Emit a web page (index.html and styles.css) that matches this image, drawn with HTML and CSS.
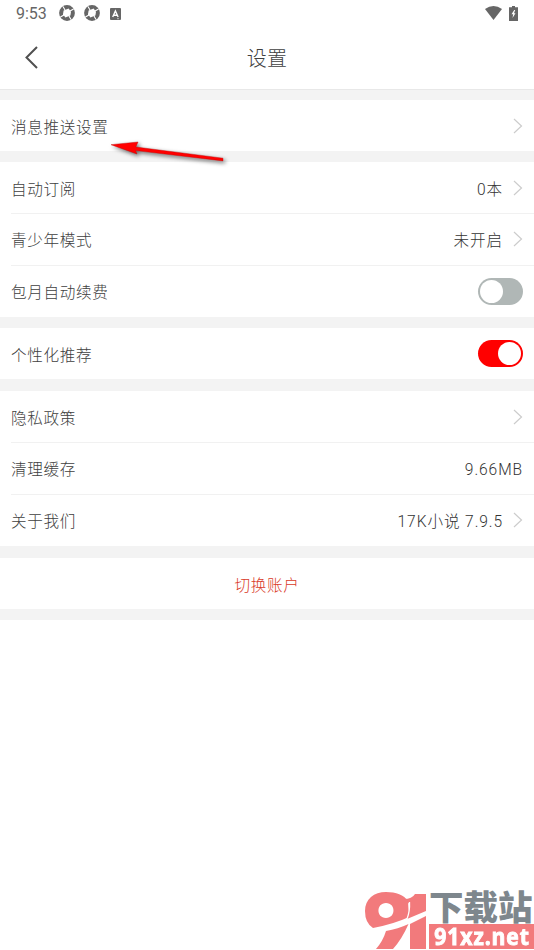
FILE: index.html
```html
<!DOCTYPE html>
<html lang="zh-CN">
<head>
<meta charset="utf-8">
<title>设置</title>
<link rel="stylesheet" href="styles.css">
</head>
<body>
<svg class="defs" aria-hidden="true">
  <symbol id="chevron" viewBox="0 0 10 16"><path d="M1 1l7.5 7L1 15"/></symbol>
  <symbol id="aperture" viewBox="0 0 16 16">
    <circle cx="8" cy="8" r="7.9" fill="#666"/>
    <path d="M4.6 5.6L9.6 3.6 12 6.8 11.4 10.4 6.4 12.4 4 9.2z" fill="#fff"/>
    <path d="M6 5L4 1.4M11 6L14.6 4M10 11L12 14.6M5 10L1.4 12" stroke="#fff" stroke-width="1.1"/>
  </symbol>
</svg>
<div class="status">
  <span class="time">9:53</span>
  <svg class="app"><use href="#aperture"/></svg>
  <svg class="app"><use href="#aperture"/></svg>
  <svg class="badge" viewBox="0 0 11 12"><rect width="11" height="12" rx="1" fill="#666"/><path d="M2.7 9L5.4 3 8.1 9M3.7 7.2h3.5" fill="none" stroke="#fff" stroke-width="1.4"/><path d="M7 10.7h2" stroke="#ddd" stroke-width=".7"/></svg>
  <svg class="wifi" viewBox="0 0 17 14"><path d="M0 3.1Q8.5-3 17 3.1L8.5 14z" fill="#666"/></svg>
  <svg class="battery" viewBox="0 0 9 15"><path d="M3 0h3v1.2h3V15H0V1.2h3z" fill="#666"/><path d="M5.2 4L2.5 8.2h1.7L3.5 12l3-4.7H5L6.2 4z" fill="#fff"/></svg>
</div>
<header class="header">
  <svg class="back" viewBox="0 0 13 23"><path d="M12 1L1.5 11.5 12 22"/></svg>
  <h1>设置</h1>
</header>
<main>
  <section class="group first">
    <div class="row"><span>消息推送设置</span><svg class="chevron"><use href="#chevron"/></svg></div>
  </section>
  <section class="group subscriptions">
    <div class="row"><span>自动订阅</span><span class="value">0本</span><svg class="chevron"><use href="#chevron"/></svg></div>
    <div class="row"><span>青少年模式</span><span class="value">未开启</span><svg class="chevron"><use href="#chevron"/></svg></div>
    <div class="row"><span>包月自动续费</span><i class="switch"></i></div>
  </section>
  <section class="group personal">
    <div class="row"><span>个性化推荐</span><i class="switch on"></i></div>
  </section>
  <section class="group about">
    <div class="row"><span>隐私政策</span><svg class="chevron"><use href="#chevron"/></svg></div>
    <div class="row"><span>清理缓存</span><span class="value end">9.66MB</span></div>
    <div class="row"><span>关于我们</span><span class="value">17K小说 7.9.5</span><svg class="chevron"><use href="#chevron"/></svg></div>
  </section>
  <section class="group account"><div class="row"><span>切换账户</span></div></section>
</main>
<svg class="pointer" viewBox="0 0 130 34">
  <path d="M5 8.7L32 6 29.8 11 117 22.2V24.9L29.6 14.6 31 18z" fill="#f00" stroke="#c00000" stroke-width=".4"/>
</svg>
<div class="watermark">
  <svg class="mark" viewBox="0 0 62 58">
    <path fill="#f27a7c" fill-rule="evenodd" d="M22 1C32 1 40 4 44 10L45 26Q30 33 9 37Q1 32 1 20C1 8 10 1 22 1zM22 12C12 12 12 27 22 27C32 27 32 12 22 12z"/>
    <path d="M40 8Q48 8 51 3H62V20L43 28L45.5 13z" fill="#f27a7c"/>
    <path d="M22 40Q34 38 44.5 33Q38 48 29 58H12Q19 50 22 40zM46 33L62 25V58H46z" fill="#f27a7c"/>
    <path d="M45.5 11Q46 20 43 28" fill="none" stroke="#fff" stroke-width="1.3"/>
  </svg>
  <div class="brand"><div class="brand-name">下载站</div><div class="brand-url"><span>91xz.net</span></div></div>
</div>
</body>
</html>
```
FILE: styles.css
```css
* { box-sizing: border-box; }
body {
  margin: 0;
  height: 950px;
  position: relative;
  overflow: hidden;
  background: #fff;
  color: #404040;
  font: 15.6px/20px Roboto, "Noto Sans CJK SC Light", "Noto Sans CJK SC DemiLight", "Noto Sans CJK SC", sans-serif;
  letter-spacing: .65px;
}
.defs { position: absolute; width: 0; height: 0; }
.status { height: 28px; display: flex; align-items: center; padding: 0 16px 2px; color: #666; }
.time { width: 43px; font-size: 16px; letter-spacing: 0; padding-top: 2px; }
.app { width: 16px; height: 16px; margin-right: 9px; flex: none; }
.badge { width: 11px; height: 12px; margin-left: 1px; margin-top: 1px; }
.wifi { width: 17px; height: 14px; margin-left: auto; margin-right: 7px; }
.battery { width: 9px; height: 15px; }
.header { height: 62px; display: grid; grid-template-columns: 60px 1fr 60px; align-items: center; border-bottom: 1px solid #e8e8e8; }
.back { width: 13px; height: 23px; margin-left: 25px; margin-top: -2px; fill: none; stroke: #505050; stroke-width: 2; }
.header h1 { margin: 0; padding-top: 1px; text-align: center; font-size: 20px; line-height: 28px; font-weight: 300; letter-spacing: .3px; }
main { background: #f3f3f3; padding: 10px 0 11px; }
.group { background: #fff; }
.row { height: 51px; display: flex; align-items: center; margin-left: 11px; padding-right: 11px; padding-top: 3px; }
.row > span { padding-top: 1px; font-weight: 300; }
.row + .row { height: 52px; padding-top: 2px; border-top: 1px solid #f1f1f1; }
.row .value { margin-left: auto; margin-right: 10px; font-size: 15.6px; letter-spacing: .9px; color: #333; }
.row .value.end { margin-right: 0; }
.chevron { width: 10px; height: 16px; margin-left: auto; margin-top: -3px; fill: none; stroke: #ccc; stroke-width: 1.2; }
.value + .chevron { margin-left: 0; }
.subscriptions { margin-top: 11px; }
.personal { margin-top: 11px; }
.about, .account { margin-top: 12px; }
.account .row { justify-content: center; margin-left: 0; padding-right: 0; color: #d93a28; }
.switch { width: 45px; height: 27px; margin-left: auto; margin-top: -3px; border-radius: 14px; background: #b0b7b6; padding: 2px; display: flex; }
.switch::before { content: ""; width: 23px; height: 23px; border-radius: 50%; background: #fff; }
.switch.on { background: #f00; justify-content: flex-end; margin-top: -4px; }
.pointer { position: absolute; left: 106px; top: 136px; width: 130px; height: 34px; overflow: visible; filter: drop-shadow(2px 2px 2px #0009); }
.watermark { position: absolute; left: 364px; top: 891px; width: 170px; height: 59px; display: flex; }
.mark { width: 62px; height: 58px; flex: none; }
.brand { flex: 1; margin-left: 3px; }
.brand-name { height: 33px; font: 900 34.5px/33px "Noto Sans CJK SC Black", "Noto Sans CJK SC", sans-serif; color: #7e878d; letter-spacing: 0; white-space: nowrap; position: relative; top: -2px; }
.brand-url { height: 25px; background: #f27a7c; color: #fff; display: flex; justify-content: center; align-items: center; font: 700 23.5px/24px "Open Sans", sans-serif; letter-spacing: 1px; -webkit-text-stroke: .9px #fff; }
.brand-url span { transform: scaleX(.9); margin-top: -2px; }
```
